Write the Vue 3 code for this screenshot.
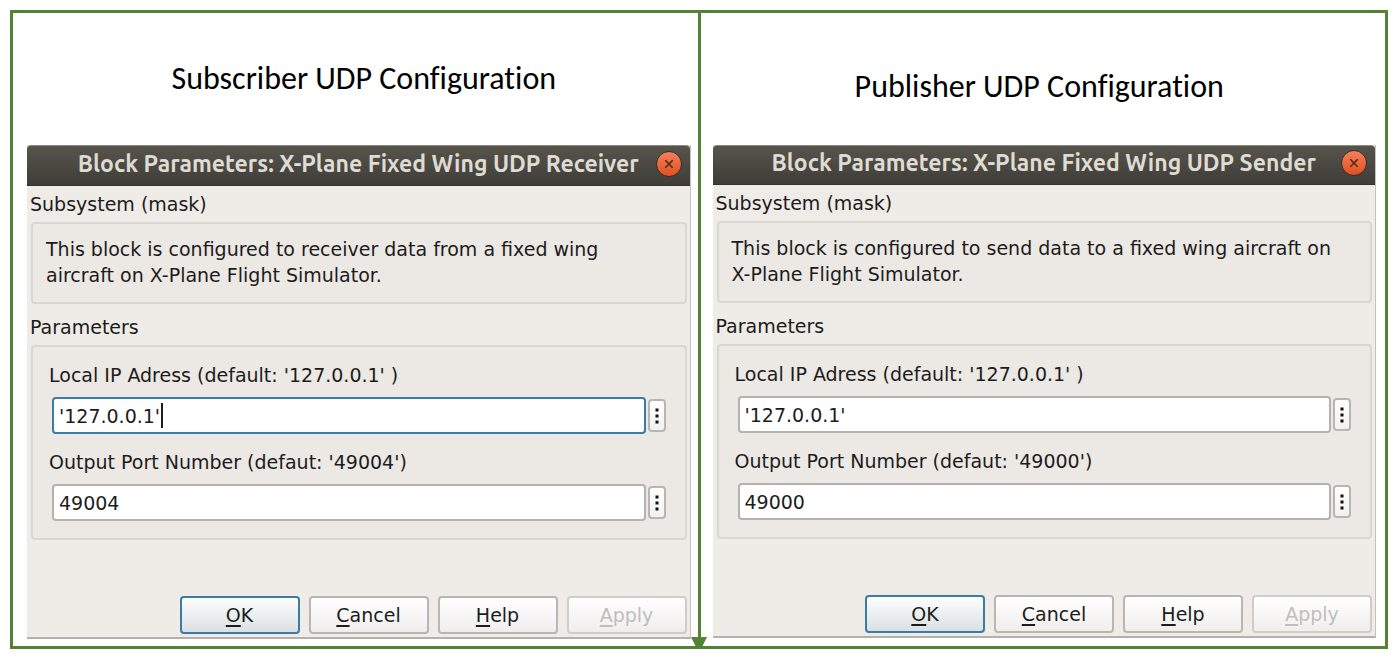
<script setup>
import { ref } from 'vue'

const panels = ref([
  {
    id: 'subscriber',
    heading: 'Subscriber UDP Configuration',
    title: 'Block Parameters: X-Plane Fixed Wing UDP Receiver',
    description:
      'This block is configured to receiver data from a fixed wing\naircraft on X-Plane Flight Simulator.',
    fields: [
      { id: 'ip', label: "Local IP Adress (default: '127.0.0.1' )", value: "'127.0.0.1'", active: true },
      { id: 'port', label: "Output Port Number (defaut: '49004')", value: '49004', active: false }
    ]
  },
  {
    id: 'publisher',
    heading: 'Publisher UDP Configuration',
    title: 'Block Parameters: X-Plane Fixed Wing UDP Sender',
    description:
      'This block is configured to send data to a fixed wing aircraft on\nX-Plane Flight Simulator.',
    fields: [
      { id: 'ip', label: "Local IP Adress (default: '127.0.0.1' )", value: "'127.0.0.1'", active: false },
      { id: 'port', label: "Output Port Number (defaut: '49000')", value: '49000', active: false }
    ]
  }
])

const actions = [
  { key: 'O', rest: 'K', primary: true, disabled: false },
  { key: 'C', rest: 'ancel', primary: false, disabled: false },
  { key: 'H', rest: 'elp', primary: false, disabled: false },
  { key: 'A', rest: 'pply', primary: false, disabled: true }
]
</script>

<template>
  <main class="frame">
    <section v-for="panel in panels" :key="panel.id" class="panel" :class="panel.id">
      <h1 class="heading">{{ panel.heading }}</h1>
      <form class="dialog" @submit.prevent>
        <header class="titlebar">
          <h2 class="title">{{ panel.title }}</h2>
          <button class="close" type="button" aria-label="Close">
            <svg viewBox="0 0 26 26" width="26" height="26" aria-hidden="true">
              <path d="M9 9 L17 17 M17 9 L9 17" fill="none" stroke="#4b2a17" stroke-width="1.7" />
            </svg>
          </button>
        </header>
        <div class="body">
          <h3 class="caption">Subsystem (mask)</h3>
          <p class="group description">{{ panel.description }}</p>
          <h3 class="caption second">Parameters</h3>
          <div class="group params">
            <div v-for="field in panel.fields" :key="field.id" class="field">
              <label :for="panel.id + '-' + field.id">{{ field.label }}</label>
              <div class="row">
                <div class="box">
                  <input
                    :id="panel.id + '-' + field.id"
                    v-model="field.value"
                    type="text"
                    :class="{ active: field.active }"
                  />
                  <span v-if="field.active" class="caret" aria-hidden="true"></span>
                </div>
                <button class="more" type="button" aria-label="More options">
                  <svg viewBox="0 0 4 16" width="4" height="16" aria-hidden="true">
                    <path d="M0.5 0.5h3v3h-3z M0.5 6.5h3v3h-3z M0.5 12.5h3v3h-3z" fill="#111" />
                  </svg>
                </button>
              </div>
            </div>
          </div>
          <footer class="actions">
            <button
              v-for="action in actions"
              :key="action.key"
              type="button"
              class="action"
              :class="{ primary: action.primary }"
              :disabled="action.disabled"
            ><span class="key">{{ action.key }}</span>{{ action.rest }}</button>
          </footer>
        </div>
      </form>
    </section>
    <div class="divider"></div>
    <svg class="arrow" viewBox="0 0 16 16" width="16" height="16" aria-hidden="true">
      <path d="M0 0h16L8 16z" fill="#548235" />
    </svg>
  </main>
</template>

<style>
body {
  background: #fff;
}
</style>

<style scoped>
* {
  box-sizing: border-box;
}

.frame {
  position: relative;
  display: grid;
  grid-template-columns: 1fr 3px 1fr;
  margin: 10px 9px 0 10px;
  border: 3px solid #548235;
  color: #1c1c1c;
  font-family: "DejaVu Sans", sans-serif;
  font-size: 19px;
}

.panel {
  grid-row: 1;
  min-width: 0;
}

.subscriber {
  grid-column: 1;
  padding: 0 7px 7px 14px;
}

.divider {
  grid-row: 1;
  grid-column: 2;
  background: #548235;
}

.publisher {
  grid-column: 3;
  padding: 0 9px 8px 12px;
}

.heading {
  height: 132px;
  margin: 0;
  color: #000;
  font-family: Carlito, Lato, sans-serif;
  font-size: 32px;
  font-weight: 400;
  font-variant-ligatures: none;
  line-height: 36px;
  text-align: center;
}

.subscriber .heading {
  padding: 48px 0 0 10px;
}

.publisher .heading {
  padding: 56px 10px 0 0;
}

.dialog {
  background: #efebe7;
  border-right: 1px solid #c4c1be;
  border-bottom: 2px solid #b3b0ae;
}

.titlebar {
  display: grid;
  grid-template-columns: 1fr auto 1fr;
  align-items: center;
  height: 40px;
  padding: 0 8px 4px;
  background: linear-gradient(#57544c, #3f3d38);
  border-top: 1px solid #8d8a86;
  border-bottom: 1px solid #33312d;
  border-radius: 4px 4px 0 0;
}

.subscriber .titlebar {
  height: 41px;
}

.title {
  grid-column: 2;
  margin: 0;
  color: #dfdbd2;
  font-family: Ubuntu, "Open Sans", sans-serif;
  font-size: 23px;
  font-weight: 700;
  line-height: 28px;
  white-space: nowrap;
}

.close {
  display: flex;
  justify-self: end;
  width: 26px;
  height: 26px;
  padding: 0;
  align-items: center;
  justify-content: center;
  background: linear-gradient(#f47f5c, #e2501f);
  border: 1px solid #33312d;
  border-radius: 50%;
}

.body {
  padding: 5px 3px 3px;
}

.caption {
  margin: 0;
  font-size: inherit;
  font-weight: 400;
  line-height: 26px;
}

.group {
  margin: 5px 0 0 1px;
  background: #ece8e4;
  border: 2px solid #dad6d2;
  border-radius: 4px;
}

.description {
  height: 82px;
  padding: 12px 13px;
  line-height: 26px;
  white-space: pre-line;
}

.second {
  margin-top: 10px;
}

.params {
  padding: 15px 19px 17px 18px;
}

.field + .field {
  margin-top: 15px;
}

.field label {
  display: block;
  margin-left: -2px;
  line-height: 26px;
}

.row {
  display: flex;
  align-items: center;
  gap: 2px;
  margin-top: 9px;
}

.box {
  position: relative;
  flex: 1;
  min-width: 0;
  margin-left: 1px;
}

input {
  display: block;
  width: 100%;
  height: 37px;
  padding: 0 5px;
  color: #1c1c1c;
  background: #fff;
  border: 2px solid #b5b1ae;
  border-radius: 4px;
  outline: none;
  font: inherit;
}

input.active {
  border-color: #3a7ca8;
}

.caret {
  position: absolute;
  top: 6px;
  left: 109px;
  width: 2px;
  height: 25px;
  background: #1c1c1c;
}

.more {
  display: flex;
  align-items: center;
  justify-content: center;
  width: 18px;
  height: 33px;
  padding: 0;
  background: linear-gradient(#fff, #f3f1f0);
  border: 2px solid #b9b5b2;
  border-radius: 4px;
}

.actions {
  display: flex;
  justify-content: flex-end;
  gap: 9px;
  margin-top: 56px;
}

.action {
  width: 120px;
  height: 38px;
  padding: 0;
  color: #1c1c1c;
  background: linear-gradient(#fff, #f0eeed);
  border: 2px solid #b9b5b2;
  border-radius: 4px;
  font: inherit;
}

.action.primary {
  background: linear-gradient(#fdfefe, #dae0e3);
  border-color: #3a7ca8;
}

.action:disabled {
  color: #c0bebc;
  border-color: #cfccc9;
}

.key {
  text-decoration: underline;
  text-decoration-thickness: 2px;
  text-underline-offset: 3px;
}

.arrow {
  position: absolute;
  left: 50%;
  bottom: -7px;
  margin-left: -8px;
}
</style>
